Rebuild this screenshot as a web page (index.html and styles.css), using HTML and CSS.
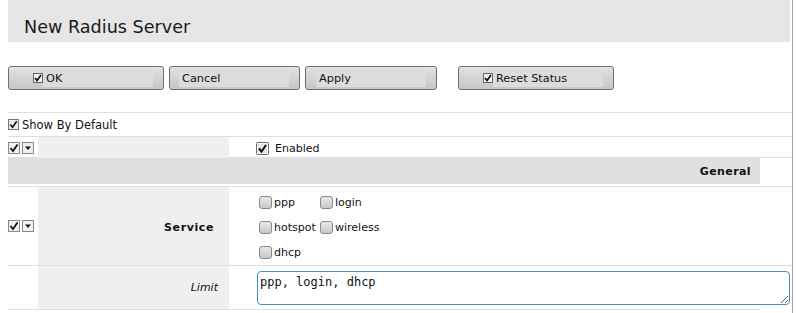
FILE: index.html
```html
<!DOCTYPE html>
<html lang="en">
<head>
    <meta charset="UTF-8">
    <title>New Radius Server</title>
    <link rel="stylesheet" href="styles.css">
</head>
<body>
<div class="page">

    <div class="title-bar">
        <h1>New Radius Server</h1>
    </div>

    <div class="buttons">
        <button class="btn btn-ok"><svg class="btn-icon" width="10" height="10" viewBox="0 0 10 10"><rect x="0.5" y="0.5" width="9" height="9" fill="#f4f4f4" stroke="#666"/><path d="M2 5 L4 7.5 L8 2" fill="none" stroke="#111" stroke-width="1.7"/></svg><span>OK</span></button>
        <button class="btn btn-cancel"><span>Cancel</span></button>
        <button class="btn btn-apply"><span>Apply</span></button>
        <button class="btn btn-reset"><svg class="btn-icon" width="10" height="10" viewBox="0 0 10 10"><rect x="0.5" y="0.5" width="9" height="9" fill="#f4f4f4" stroke="#666"/><path d="M2 5 L4 7.5 L8 2" fill="none" stroke="#111" stroke-width="1.7"/></svg><span>Reset Status</span></button>
    </div>

    <div class="show-default">
        <svg class="mini" width="11" height="11" viewBox="0 0 11 11"><rect x="0.5" y="0.5" width="10" height="10" fill="#f0f0f0" stroke="#777"/><path d="M2.2 5.5 L4.5 8.2 L8.8 2.3" fill="none" stroke="#111" stroke-width="1.7"/></svg>
        <span>Show By Default</span>
    </div>

    <div class="row row-enabled">
        <div class="tools">
            <svg class="mini" width="12" height="12" viewBox="0 0 12 12"><rect x="0.5" y="0.5" width="11" height="11" fill="#f0f0f0" stroke="#888"/><path d="M2.5 6 L5 9 L9.5 2.5" fill="none" stroke="#111" stroke-width="1.8"/></svg>
            <svg class="mini" width="12" height="12" viewBox="0 0 12 12"><rect x="0.5" y="0.5" width="11" height="11" fill="#f0f0f0" stroke="#888"/><path d="M3 4.5 L9 4.5 L6 8 Z" fill="#111"/></svg>
        </div>
        <div class="label"></div>
        <div class="value">
            <label class="big-check"><svg width="13" height="13" viewBox="0 0 13 13"><rect x="0.5" y="0.5" width="12" height="12" rx="1" fill="#d8d8d8" stroke="#6a6a6a"/><rect x="1.5" y="1.5" width="10" height="10" fill="#e4e4e4" stroke="#fafafa"/><path d="M3 6.5 L5.5 9.5 L10 3" fill="none" stroke="#111" stroke-width="2"/></svg>Enabled</label>
        </div>
    </div>

    <div class="section-head">General</div>

    <div class="row row-service">
        <div class="tools">
            <svg class="mini" width="12" height="12" viewBox="0 0 12 12"><rect x="0.5" y="0.5" width="11" height="11" fill="#f0f0f0" stroke="#888"/><path d="M2.5 6 L5 9 L9.5 2.5" fill="none" stroke="#111" stroke-width="1.8"/></svg>
            <svg class="mini" width="12" height="12" viewBox="0 0 12 12"><rect x="0.5" y="0.5" width="11" height="11" fill="#f0f0f0" stroke="#888"/><path d="M3 4.5 L9 4.5 L6 8 Z" fill="#111"/></svg>
        </div>
        <div class="label bold">Service</div>
        <div class="value">
            <div class="opts">
                <label class="opt"><i class="box"></i>ppp</label>
                <label class="opt"><i class="box"></i>login</label>
                <label class="opt"><i class="box"></i>hotspot</label>
                <label class="opt"><i class="box"></i>wireless</label>
                <label class="opt"><i class="box"></i>dhcp</label>
            </div>
        </div>
    </div>

    <div class="row row-limit">
        <div class="tools"></div>
        <div class="label italic">Limit</div>
        <div class="value">
            <textarea class="limit-input">ppp, login, dhcp</textarea>
        </div>
    </div>

</div>
</body>
</html>
```

FILE: styles.css
```css
body { margin: 0; font-family: "DejaVu Sans", sans-serif; font-size: 11px; color: #111; background: #fff; }
.page { margin-left: 8px; width: 784px; min-height: 313px; border-right: 1px solid #a6a6a6; }

.title-bar { background: #e6e6e6; height: 42px; margin-right: 2px; }
.title-bar h1 { margin: 0; padding: 18px 0 0 16px; font-size: 17.6px; line-height: 18px; font-weight: normal; color: #1a1a1a; }

.buttons { display: flex; margin-top: 24px; height: 24px; }
.btn { display: flex; align-items: center; justify-content: flex-end; height: 24px; padding: 0 10px 0 0; margin: 0 5px 0 0; border: 1px solid #6e6e6e; border-radius: 3px; background: linear-gradient(to bottom, #e2e2e2, #d4d4d4 50%, #c6c6c6); font-family: "DejaVu Sans", sans-serif; font-size: 11.3px; color: #111; box-sizing: border-box; }
.btn span { display: block; width: 107px; height: 17px; line-height: 17px; padding-left: 3px; background: #dcdcdc; text-align: left; }
.btn-icon { margin-right: 0; }
.btn-ok { width: 156px; }
.btn-cancel { width: 131px; }
.btn-apply { width: 132px; }
.btn-reset { width: 156px; margin-left: 16px; }

.show-default { display: flex; align-items: center; gap: 3px; margin-top: 22px; height: 23px; border-top: 1px solid #dedede; border-bottom: 1px solid #dedede; font-size: 11.5px; }
.mini { display: block; }

.row { display: grid; grid-template-columns: 30px 191px 1fr; border-bottom: 1px solid #dedede; }
.tools { display: flex; align-items: center; gap: 2px; }
.label { background: #efefef; text-align: right; padding-right: 15px; display: flex; align-items: center; justify-content: flex-end; }
.label.bold { font-weight: bold; letter-spacing: 0.6px; padding-top: 3px; }
.label.italic { font-style: italic; padding-right: 11px; }
.value { padding-left: 27px; }

.row-enabled { height: 20px; }
.big-check { display: flex; align-items: center; gap: 6px; height: 20px; padding-top: 1px; }

.section-head { height: 28px; line-height: 28px; width: 752px; background: #e0e0e0; text-align: right; padding-right: 9px; box-sizing: border-box; font-weight: bold; letter-spacing: 0.4px; font-size: 11px; border-bottom: 2px solid #fff; }
.row-service { border-top: 1px solid #dedede; height: 78px; }
.row-service .value { padding-left: 30px; }
.opts { display: grid; grid-template-columns: 61px 80px; row-gap: 11px; padding-top: 8px; }
.opt { display: flex; align-items: center; gap: 2px; height: 14px; }
.box { display: block; width: 11px; height: 11px; border: 1px solid #8a8a8a; border-radius: 3px; background: linear-gradient(to bottom, #e8e8e8, #c8c8c8); }

.row-limit { height: 43px; width: 752px; }
.row-limit .value { padding-left: 28px; }
.limit-input { display: block; width: 533px; height: 34px; margin-top: 5px; box-sizing: border-box; border: 1px solid #4a8fc0; border-radius: 4px; font-family: "DejaVu Sans Mono", monospace; font-size: 12px; padding: 3px 2px; color: #111; outline: none; resize: both; }
```
